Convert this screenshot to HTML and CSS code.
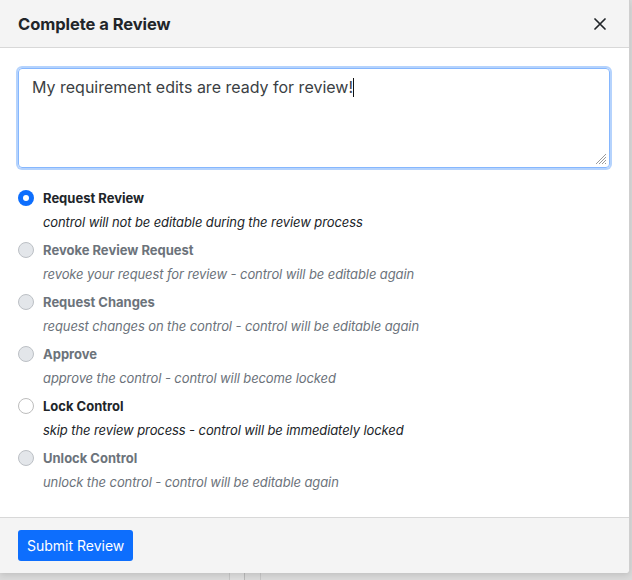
FILE: index.html
```html
<!DOCTYPE html>
<html lang="en">
<head>
<meta charset="utf-8">
<title>Complete a Review</title>
<link rel="stylesheet" href="styles.css">
</head>
<body>
<div class="page">
  <div class="col col-a"></div>
  <div class="col col-b"></div>
  <div class="col col-c"></div>
  <div class="col col-d"></div>
</div>
<div class="modal" role="dialog" aria-labelledby="modal-title">
  <div class="modal-header">
    <h5 class="modal-title" id="modal-title">Complete a Review</h5>
    <button class="btn-close" aria-label="Close">
      <svg width="12" height="12" viewBox="0 0 12 12"><path d="M1 1L11 11M11 1L1 11" stroke="#212529" stroke-width="1.7" stroke-linecap="round"/></svg>
    </button>
  </div>
  <div class="modal-body">
    <div class="textarea" role="textbox" aria-multiline="true">My requirement edits are ready for review!<span class="caret"></span>
      <svg class="grip" width="11" height="11" viewBox="0 0 11 11"><path d="M10 3L3 10M10 6L6 10M10 9L9 10M10 0L0 10" stroke="#9a9a9a" stroke-width="1"/></svg>
    </div>
    <div class="options">
      <div class="option">
        <span class="radio radio-checked"></span>
        <span class="label">Request Review</span>
        <span class="desc">control will not be editable during the review process</span>
      </div>
      <div class="option option-disabled">
        <span class="radio radio-disabled"></span>
        <span class="label">Revoke Review Request</span>
        <span class="desc">revoke your request for review - control will be editable again</span>
      </div>
      <div class="option option-disabled">
        <span class="radio radio-disabled"></span>
        <span class="label">Request Changes</span>
        <span class="desc">request changes on the control - control will be editable again</span>
      </div>
      <div class="option option-disabled">
        <span class="radio radio-disabled"></span>
        <span class="label">Approve</span>
        <span class="desc">approve the control - control will become locked</span>
      </div>
      <div class="option">
        <span class="radio"></span>
        <span class="label">Lock Control</span>
        <span class="desc">skip the review process - control will be immediately locked</span>
      </div>
      <div class="option option-disabled">
        <span class="radio radio-disabled"></span>
        <span class="label">Unlock Control</span>
        <span class="desc">unlock the control - control will be editable again</span>
      </div>
    </div>
  </div>
  <div class="modal-footer">
    <button class="btn-primary">Submit Review</button>
  </div>
</div>
</body>
</html>
```

FILE: styles.css
```css
* { box-sizing: border-box; }

html, body {
  margin: 0;
  padding: 0;
}

body {
  width: 632px;
  height: 580px;
  position: relative;
  overflow: hidden;
  background: #dadada;
  font-family: Inter, "Liberation Sans", Arial, sans-serif;
  color: #212529;
}

.page {
  display: flex;
  height: 580px;
}

.col { height: 100%; }
.col-a { width: 230px; border-right: 1px solid #c6c6c6; }
.col-b { width: 15px; background: #dedede; border-right: 1px solid #b9b9b9; }
.col-c { width: 16px; border-right: 1px solid #c6c6c6; }
.col-d { flex: 1; }

.modal {
  position: absolute;
  top: 0;
  left: 0;
  width: 630px;
  background: #fff;
  border-right: 1px solid #cfcfcf;
  border-bottom-right-radius: 4px;
  box-shadow: 0 2px 6px rgba(0, 0, 0, 0.12);
  display: flex;
  flex-direction: column;
}

.modal-header {
  height: 48px;
  background: #f4f4f4;
  border-bottom: 1px solid #d8d8d8;
  display: flex;
  align-items: center;
  justify-content: space-between;
  padding: 0 23px 0 18px;
}

.modal-title {
  margin: 0;
  font-size: 16.5px;
  font-weight: 700;
  letter-spacing: -0.05px;
  color: #212529;
}

.btn-close {
  border: 0;
  background: none;
  padding: 0;
  width: 12px;
  height: 12px;
  display: flex;
}

.modal-body {
  padding: 20px 19px 23px 18px;
}

.textarea {
  position: relative;
  width: 592px;
  height: 100px;
  border: 1px solid #86b7fe;
  border-radius: 4px;
  box-shadow: 0 0 0 2px #b5d3fd;
  padding: 6px 13px;
  font-size: 16px;
  line-height: 24px;
  color: #3b3f44;
  margin-bottom: 18px;
}

.caret {
  display: inline-block;
  width: 1px;
  height: 19px;
  background: #111;
  vertical-align: -4px;
  margin-left: 0;
}

.grip {
  position: absolute;
  right: 2px;
  bottom: 2px;
}

.options {
  display: flex;
  flex-direction: column;
  gap: 4px;
}

.option {
  display: grid;
  grid-template-columns: 16px 1fr;
  grid-template-rows: 24px 24px;
  column-gap: 9px;
  align-items: center;
  font-size: 13px;
  color: #212529;
}

.label {
  font-weight: 700;
  grid-column: 2;
  grid-row: 1;
}

.desc {
  font-style: italic;
  letter-spacing: -0.1px;
  grid-column: 2;
  grid-row: 2;
}

.radio {
  grid-column: 1;
  grid-row: 1;
  width: 16px;
  height: 16px;
  border-radius: 50%;
  border: 1px solid #bdbdbd;
  background: #fff;
}

.radio-checked {
  border: 0;
  background: #0d6efd;
  display: flex;
  align-items: center;
  justify-content: center;
}

.radio-checked::after {
  content: "";
  width: 6px;
  height: 6px;
  border-radius: 50%;
  background: #fff;
}

.radio-disabled {
  background: #e3e6ea;
  border-color: #bcc0c5;
}

.option-disabled .label,
.option-disabled .desc {
  color: #6c737b;
}

.modal-footer {
  background: #f4f4f4;
  border-top: 1px solid #d8d8d8;
  padding: 12px 18px;
  display: flex;
  border-bottom-right-radius: 4px;
}

.btn-primary {
  height: 31px;
  padding: 0 9px;
  border: 0;
  border-radius: 3px;
  background: #0d6efd;
  color: #fff;
  font-family: inherit;
  font-size: 14px;
}
```
